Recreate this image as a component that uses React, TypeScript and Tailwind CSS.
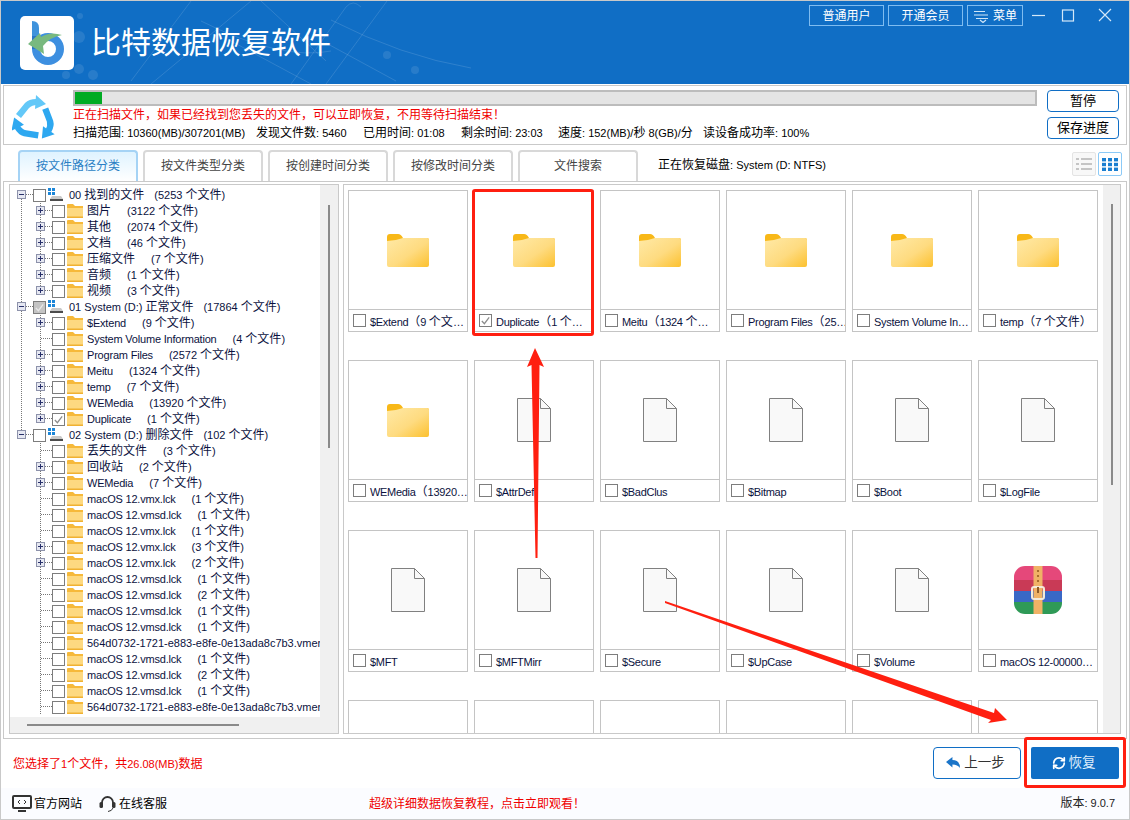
import { RefreshCw } from "lucide-react";

type TreeRow = {
  root?: boolean;
  name: string;
  count: string;
  plus?: boolean;
  check?: boolean;
  mixed?: boolean;
  group: number;
  last?: boolean;
};

const treeRows: TreeRow[] = [
  { root: true, name: "00 找到的文件", count: "(5253 个文件)", group: 0 },
  { name: "图片", count: "(3122 个文件)", plus: true, group: 0 },
  { name: "其他", count: "(2074 个文件)", plus: true, group: 0 },
  { name: "文档", count: "(46 个文件)", plus: true, group: 0 },
  { name: "压缩文件", count: "(7 个文件)", plus: true, group: 0 },
  { name: "音频", count: "(1 个文件)", plus: true, group: 0 },
  { name: "视频", count: "(3 个文件)", plus: true, group: 0, last: true },
  { root: true, name: "01 System (D:) 正常文件", count: "(17864 个文件)", mixed: true, group: 1 },
  { name: "$Extend", count: "(9 个文件)", plus: true, group: 1 },
  { name: "System Volume Information", count: "(4 个文件)", group: 1 },
  { name: "Program Files", count: "(2572 个文件)", plus: true, group: 1 },
  { name: "Meitu", count: "(1324 个文件)", plus: true, group: 1 },
  { name: "temp", count: "(7 个文件)", plus: true, group: 1 },
  { name: "WEMedia", count: "(13920 个文件)", plus: true, group: 1 },
  { name: "Duplicate", count: "(1 个文件)", plus: true, check: true, group: 1, last: true },
  { root: true, name: "02 System (D:) 删除文件", count: "(102 个文件)", group: 2 },
  { name: "丢失的文件", count: "(3 个文件)", group: 2 },
  { name: "回收站", count: "(2 个文件)", plus: true, group: 2 },
  { name: "WEMedia", count: "(7 个文件)", plus: true, group: 2 },
  { name: "macOS 12.vmx.lck", count: "(1 个文件)", group: 2 },
  { name: "macOS 12.vmsd.lck", count: "(1 个文件)", group: 2 },
  { name: "macOS 12.vmx.lck", count: "(1 个文件)", group: 2 },
  { name: "macOS 12.vmx.lck", count: "(3 个文件)", plus: true, group: 2 },
  { name: "macOS 12.vmx.lck", count: "(2 个文件)", plus: true, group: 2 },
  { name: "macOS 12.vmsd.lck", count: "(1 个文件)", group: 2 },
  { name: "macOS 12.vmsd.lck", count: "(2 个文件)", group: 2 },
  { name: "macOS 12.vmsd.lck", count: "(1 个文件)", group: 2 },
  { name: "macOS 12.vmsd.lck", count: "(1 个文件)", group: 2 },
  { name: "564d0732-1721-e883-e8fe-0e13ada8c7b3.vmem", count: "", group: 2 },
  { name: "macOS 12.vmsd.lck", count: "(1 个文件)", group: 2 },
  { name: "macOS 12.vmsd.lck", count: "(2 个文件)", group: 2 },
  { name: "macOS 12.vmsd.lck", count: "(1 个文件)", group: 2 },
  { name: "564d0732-1721-e883-e8fe-0e13ada8c7b3.vmem", count: "", group: 2 },
];

type Card = { label: string; kind: "folder" | "file" | "rar" | "none"; check?: boolean };

const cards: Card[] = [
  { label: "$Extend（9 个文…", kind: "folder" },
  { label: "Duplicate（1 个…", kind: "folder", check: true },
  { label: "Meitu（1324 个…", kind: "folder" },
  { label: "Program Files（25…", kind: "folder" },
  { label: "System Volume In…", kind: "folder" },
  { label: "temp（7 个文件）", kind: "folder" },
  { label: "WEMedia（13920…", kind: "folder" },
  { label: "$AttrDef", kind: "file" },
  { label: "$BadClus", kind: "file" },
  { label: "$Bitmap", kind: "file" },
  { label: "$Boot", kind: "file" },
  { label: "$LogFile", kind: "file" },
  { label: "$MFT", kind: "file" },
  { label: "$MFTMirr", kind: "file" },
  { label: "$Secure", kind: "file" },
  { label: "$UpCase", kind: "file" },
  { label: "$Volume", kind: "file" },
  { label: "macOS 12-00000…", kind: "rar" },
  { label: "", kind: "none" },
  { label: "", kind: "none" },
  { label: "", kind: "none" },
  { label: "", kind: "none" },
  { label: "", kind: "none" },
  { label: "", kind: "none" },
];

const tabs = ["按文件路径分类", "按文件类型分类", "按创建时间分类", "按修改时间分类", "文件搜索"];

// latin runs stay at the parent's 11px, chinese runs go to 12px like the real app
const Mixed = ({ text }: { text: string }) => (
  <>
    {text.split(/([\u3000-\u9fff\uff00-\uffef]+)/).map((part, index) =>
      index % 2 === 1 ? (
        <span key={index} className="text-[12px] leading-none tracking-normal">
          {part}
        </span>
      ) : (
        part
      ),
    )}
  </>
);

const Checkbox = ({ check, mixed }: { check?: boolean; mixed?: boolean }) => (
  <span
    className={`flex h-[13px] w-[13px] shrink-0 items-center justify-center border border-[#7d7d7d] ${
      mixed ? "bg-[#c4c4c4]" : "bg-white"
    }`}
  >
    {(check || mixed) && (
      <svg width="11" height="11" viewBox="0 0 12 12" fill="none">
        <path d="M2 6.5 L4.8 9.5 L10 2.5" stroke={mixed ? "#e8e8e8" : "#8c8c8c"} strokeWidth="1.4" />
      </svg>
    )}
  </span>
);

const Expander = ({ x, plus }: { x: number; plus?: boolean }) => (
  <g shapeRendering="crispEdges">
    <rect x={x + 0.5} y="3.5" width="8" height="8" fill="#e6e8f2" stroke="#8d92ab" />
    <path d={`M${x + 2} 7.5 H${x + 7}`} stroke="#28306a" />
    {plus && <path d={`M${x + 4.5} 5 V10`} stroke="#28306a" />}
  </g>
);

const dots = { stroke: "#777", strokeDasharray: "1 1", shapeRendering: "crispEdges" as const };

const Gutter = ({ row }: { row: TreeRow }) => {
  if (row.root) {
    return (
      <svg width="23" height="16" className="shrink-0">
        {row.group > 0 && <path d="M11.5 0 V4" {...dots} fill="none" />}
        {row.group < 2 && <path d="M11.5 12 V16" {...dots} fill="none" />}
        <path d="M16 7.5 H23" {...dots} fill="none" />
        <Expander x={7} />
      </svg>
    );
  }
  return (
    <svg width="42" height="16" className="shrink-0">
      {row.group < 2 && <path d="M11.5 0 V16" {...dots} fill="none" />}
      <path d={row.last ? "M30.5 0 V8" : "M30.5 0 V16"} {...dots} fill="none" />
      <path d="M31 7.5 H42" {...dots} fill="none" />
      {row.plus && <Expander x={26} plus />}
    </svg>
  );
};

const TreeFolder = () => (
  <svg width="16" height="14" viewBox="0 0 16 14" className="shrink-0">
    <path d="M0 1 Q0 0 1 0 H6 L8 2 H16 V13 Q16 14 15 14 H1 Q0 14 0 13 Z" fill="#f6b93a" />
    <rect x="0" y="4" width="16" height="10" fill="#fdd981" />
    <rect x="0" y="12.5" width="16" height="1.5" fill="#f0b132" />
  </svg>
);

const Drive = () => (
  <svg width="16" height="14" viewBox="0 0 16 14" className="shrink-0">
    <rect x="0" y="0" width="3" height="3" fill="#1c86d8" />
    <rect x="4" y="0" width="3" height="3" fill="#1c86d8" />
    <rect x="0" y="4" width="3" height="3" fill="#1c86d8" />
    <rect x="4" y="4" width="3" height="3" fill="#1c86d8" />
    <path d="M4 8 H13 L15 11 H2 Z" fill="#c9c9c9" />
    <rect x="2" y="11" width="13" height="2" fill="#4c4c4c" />
  </svg>
);

const BigFolder = () => (
  <svg width="42" height="33" viewBox="0 0 42 33">
    <defs>
      <linearGradient id="folderFill" x1="0" y1="0" x2="1" y2="1">
        <stop offset="0" stopColor="#ffe9a6" />
        <stop offset="0.55" stopColor="#fedb80" />
        <stop offset="1" stopColor="#fcc12f" />
      </linearGradient>
    </defs>
    <path d="M0 3 Q0 0 3 0 H11 Q14 0 16 4 H40 Q42 4 42 6 V10 H0 Z" fill="#f8b818" />
    <path d="M0 7 Q8 7 16 4 H40 Q42 4 42 6 V31 Q42 33 40 33 H2 Q0 33 0 31 Z" fill="url(#folderFill)" />
  </svg>
);

const FileIcon = () => (
  <svg width="34" height="44" viewBox="0 0 34 44" fill="none">
    <path d="M.5 .5 H23.5 L33.5 10.5 V43.5 H.5 Z" fill="#f9f9f9" stroke="#808080" />
    <path d="M23.5 .5 V10.5 H33.5" stroke="#808080" />
  </svg>
);

const RarIcon = () => (
  <svg width="48" height="48" viewBox="0 0 48 48">
    <defs>
      <clipPath id="rarClip">
        <rect width="48" height="48" rx="11" />
      </clipPath>
    </defs>
    <g clipPath="url(#rarClip)">
      <rect width="48" height="18" fill="#e5487a" />
      <rect y="14" width="48" height="11" fill="#c93a56" />
      <rect y="25" width="48" height="11" fill="#3a68c6" />
      <rect y="36" width="48" height="12" fill="#2f9a57" />
      <rect x="19.5" width="9" height="48" fill="#f0b266" />
      <rect x="23" y="4" width="2" height="2" fill="#a96d2c" />
      <rect x="23" y="9" width="2" height="2" fill="#a96d2c" />
      <rect x="23" y="14" width="2" height="2" fill="#a96d2c" />
      <rect x="18" y="21" width="12" height="12" rx="2" fill="none" stroke="#f4ead8" strokeWidth="2" />
      <rect x="23" y="21" width="2" height="6" fill="#8c5a26" />
    </g>
  </svg>
);

const RecycleIcon = () => (
  <svg width="46" height="46" viewBox="0 0 46 46" className="shrink-0">
    {[0, 120, 240].map((deg) => (
      <g key={deg} transform={`rotate(${deg} 22 25)`} fill={deg === 0 ? "#63c8f8" : "#2ea8f0"}>
        <path d="M4 19 L13 8 Q17 4 24 4 L25 10 Q20 10 17 13 L9 23 Z" />
        <path d="M24 0 L34 9 L23 14 Z" />
      </g>
    ))}
  </svg>
);

const Logo = () => (
  <div className="h-[54px] w-[54px] shrink-0 rounded-[5px] bg-white">
    <svg width="54" height="54" viewBox="0 0 54 54" fill="none">
      <path d="M12 5 Q19 5 19 12 V26 H12 Z" fill="#3f93dc" />
      <circle cx="28" cy="33" r="12" stroke="#3d8fe0" strokeWidth="8" />
      <path d="M15.5 20 V33" stroke="#2a76c8" strokeWidth="7" />
      <path d="M8 28 L20 17 L21 21 Q30 15 42 19 Q30 21 23 30 L24 38 Z" fill="#78b97f" />
    </svg>
  </div>
);

const MenuIcon = () => (
  <svg width="16" height="14" viewBox="0 0 16 14" fill="none" className="shrink-0">
    <path d="M1 2.5 H12 M1 6 H15 M3 9.5 H15" stroke="#cfe5f7" strokeWidth="1.2" />
    <path d="M7 11 L10 13.5 L13 11" stroke="#cfe5f7" strokeWidth="1.2" />
  </svg>
);

const App = () => {
  return (
    <div className="relative h-[820px] w-[1130px] overflow-hidden bg-white font-['Liberation_Sans','Noto_Sans_CJK_SC',sans-serif] text-[12px] text-black">
      <div className="flex h-full flex-col border border-[#c9c9c9]">
        {/* header */}
        <div className="relative flex h-[83px] shrink-0 items-start justify-between overflow-hidden bg-[#106ec5]">
          <svg className="absolute inset-0" width="1128" height="83" fill="none" stroke="#ffffff" strokeOpacity="0.13">
            <path d="M386 0 L325 83 M330 19 Q400 55 470 67 M325 42 L395 80 M130 80 L190 0 M150 83 L250 0 M230 40 L310 83 M260 0 L325 60 M200 20 Q280 60 330 50 M290 83 L345 6 Q352 -2 360 6" />
            <g fill="#ffffff" fillOpacity="0.1" stroke="none">
              <circle cx="386" cy="54" r="4" />
              <circle cx="414" cy="69" r="4" />
              <circle cx="78" cy="36" r="6" />
              <circle cx="79" cy="15" r="3" />
              <circle cx="78" cy="68" r="5" />
              <circle cx="92" cy="74" r="5" />
              <circle cx="65" cy="74" r="4" />
            </g>
          </svg>
          <div className="relative flex h-full items-center">
            <div className="ml-[19px]">
              <Logo />
            </div>
            <span className="ml-[17px] whitespace-nowrap text-[30px] leading-none text-white">比特数据恢复软件</span>
          </div>
          <div className="relative mr-[8px] mt-[4px] flex items-start">
            <div className="flex h-[21px] w-[75px] items-center justify-center border border-[#7fbcf0] text-white">普通用户</div>
            <div className="ml-[4px] flex h-[21px] w-[75px] items-center justify-center border border-[#7fbcf0] text-white">开通会员</div>
            <div className="ml-[4px] flex h-[21px] w-[56px] items-center justify-center gap-[4px] border border-[#7fbcf0] text-white">
              <MenuIcon />
              <span>菜单</span>
            </div>
            <svg width="90" height="21" viewBox="0 0 90 21" fill="none" stroke="#d4e8f8" strokeWidth="1.2" className="ml-[8px]">
              <path d="M1 10.5 H14" />
              <rect x="31.5" y="5" width="11" height="11" />
              <path d="M68 4 L80 16 M80 4 L68 16" />
            </svg>
          </div>
        </div>

        {/* scan status */}
        <div className="mx-[2px] mt-[1px] flex h-[60px] shrink-0 border border-[#c9c9c9]">
          <div className="ml-[8px] mt-[9px]">
            <RecycleIcon />
          </div>
          <div className="ml-[15px] flex w-[965px] flex-col pt-[4px]">
            <div className="h-[16px] w-[964px] border-2 border-[#bcbcbc] bg-[#e4e4e4]">
              <div className="h-full w-[27px] bg-[#00ab23]" />
            </div>
            <div className="mt-[1px] whitespace-nowrap text-[12px] leading-[17px] text-[#f00000]">
              正在扫描文件，如果已经找到您丢失的文件，可以立即恢复，不用等待扫描结束！
            </div>
            <div className="flex whitespace-nowrap text-[11px] leading-[18px]">
              <span className="w-[183px]"><Mixed text="扫描范围: 10360(MB)/307201(MB)" /></span>
              <span className="w-[107px]"><Mixed text="发现文件数: 5460" /></span>
              <span className="w-[98px]"><Mixed text="已用时间: 01:08" /></span>
              <span className="w-[97px]"><Mixed text="剩余时间: 23:03" /></span>
              <span className="w-[145px]"><Mixed text="速度: 152(MB)/秒  8(GB)/分" /></span>
              <span><Mixed text="读设备成功率: 100%" /></span>
            </div>
          </div>
          <div className="ml-[9px] flex flex-col gap-[5px] pt-[4px]">
            <div className="flex h-[22px] w-[72px] items-center justify-center rounded-[4px] border border-[#106ec5] text-[13px]">暂停</div>
            <div className="flex h-[22px] w-[72px] items-center justify-center rounded-[4px] border border-[#106ec5] text-[13px]">保存进度</div>
          </div>
        </div>

        {/* tabs */}
        <div className="mt-[5px] flex h-[31px] shrink-0 items-end pl-[17px]">
          {tabs.map((tab, index) => (
            <div
              key={tab}
              className={`mr-[5px] flex h-[31px] w-[120px] items-center justify-center rounded-t-[4px] border-x-2 border-t-2 pb-[2px] ${
                index === 0
                  ? "border-[#a5d3f5] bg-gradient-to-b from-[#dff3ff] to-white text-[#2a7fc4]"
                  : "border-[#d8d8d8] bg-white text-[#444]"
              }`}
            >
              {tab}
            </div>
          ))}
          <span className="mb-[1px] ml-[15px] self-center whitespace-nowrap text-[11px]">
            <Mixed text="正在恢复磁盘: System (D: NTFS)" />
          </span>
          <div className="mb-[5px] ml-auto mr-[7px] flex gap-[2px]">
            <div className="flex h-[24px] w-[24px] items-center justify-center rounded-[2px] border border-[#e4e4e4] bg-[#f8f8f8]">
              <svg width="16" height="12" viewBox="0 0 16 12">
                <path d="M0 1 H3 M5 1 H16 M0 6 H3 M5 6 H16 M0 11 H3 M5 11 H16" stroke="#b4b4b4" strokeWidth="1.6" />
              </svg>
            </div>
            <div className="flex h-[24px] w-[24px] items-center justify-center rounded-[2px] border border-[#8ccaf7] bg-white">
              <svg width="16" height="13" viewBox="0 0 16 13" fill="#1b7fd0">
                <rect x="0" y="0" width="4" height="3.4" />
                <rect x="6" y="0" width="4" height="3.4" />
                <rect x="12" y="0" width="4" height="3.4" />
                <rect x="0" y="4.8" width="4" height="3.4" />
                <rect x="6" y="4.8" width="4" height="3.4" />
                <rect x="12" y="4.8" width="4" height="3.4" />
                <rect x="0" y="9.6" width="4" height="3.4" />
                <rect x="6" y="9.6" width="4" height="3.4" />
                <rect x="12" y="9.6" width="4" height="3.4" />
              </svg>
            </div>
          </div>
        </div>

        {/* main frame */}
        <div className="mx-[2px] flex h-[558px] shrink-0 gap-[4px] border border-[#c9c9c9] px-[5px] pb-[5px] pt-[2px]">
          {/* tree */}
          <div className="flex h-[550px] w-[330px] shrink-0 flex-col border border-[#c9c9c9]">
            <div className="flex min-h-0 flex-1">
              <div className="min-w-0 flex-1 overflow-hidden pt-[2px]">
                {treeRows.map((row, index) => (
                  <div key={index} className="flex h-4 items-center whitespace-nowrap text-[11px] leading-4 text-[#0b1240]">
                    <Gutter row={row} />
                    <Checkbox check={row.check} mixed={row.mixed} />
                    {row.root ? (
                      <span className="ml-[2px] flex items-center">
                        <Drive />
                        <span className="ml-[5px]"><Mixed text={row.name} /></span>
                        <span className="ml-[10px]"><Mixed text={row.count} /></span>
                      </span>
                    ) : (
                      <span className="ml-[2px] flex items-center">
                        <TreeFolder />
                        <span className={`ml-[4px] ${row.count ? "tracking-[-0.2px]" : ""}`}><Mixed text={row.name} /></span>
                        {row.count && <span className="ml-[16px]"><Mixed text={row.count} /></span>}
                      </span>
                    )}
                  </div>
                ))}
              </div>
              <div className="flex w-[18px] shrink-0 justify-center bg-[#f0f0f0] pt-[20px]">
                <div className="h-[243px] w-[2px] bg-[#8a8a8a]" />
              </div>
            </div>
            <div className="flex h-[16px] shrink-0 items-center bg-[#f0f0f0] pl-[17px]">
              <div className="h-[2px] w-[212px] bg-[#8a8a8a]" />
            </div>
          </div>

          {/* cards */}
          <div className="flex h-[550px] min-w-0 flex-1 border border-[#c9c9c9]">
            <div className="min-w-0 flex-1 overflow-hidden pl-[4px] pt-[5px]">
              <div className="grid grid-cols-[repeat(6,120px)] gap-x-[6px] gap-y-[28px]">
                {cards.map((card, index) => (
                  <div key={index} className="flex h-[142px] flex-col border border-[#c4c4c4] bg-white">
                    <div className="flex h-[118px] items-center justify-center">
                      {card.kind === "folder" && <BigFolder />}
                      {card.kind === "file" && <FileIcon />}
                      {card.kind === "rar" && <RarIcon />}
                    </div>
                    <div className="flex h-[22px] items-center gap-[4px] overflow-hidden border-t border-[#c4c4c4] pl-[4px] text-[11px] leading-4 text-[#0b1240]">
                      <Checkbox check={card.check} />
                      <span className="mt-[3px] whitespace-nowrap tracking-[-0.3px]"><Mixed text={card.label} /></span>
                    </div>
                  </div>
                ))}
              </div>
            </div>
            <div className="flex w-[17px] shrink-0 justify-center bg-[#f0f0f0] pt-[19px]">
              <div className="h-[281px] w-[2px] bg-[#8a8a8a]" />
            </div>
          </div>
        </div>

        {/* selection + actions */}
        <div className="flex h-[49px] shrink-0 items-center justify-between pl-[12px] pr-[10px]">
          <span className="mt-[2px] text-[11px] text-[#f00000]"><Mixed text="您选择了1个文件，共26.08(MB)数据" /></span>
          <div className="mb-[1px] flex gap-[10px]">
            <div className="flex h-[32px] w-[88px] items-center justify-center gap-[3px] rounded-[4px] border border-[#106ec5] bg-white pr-[3px] text-[13.5px] text-[#333]">
              <svg width="15" height="14" viewBox="0 0 14 14" preserveAspectRatio="none">
                <path d="M0 6 L6 1 V4 Q13 4 13 12 Q11 8.5 6 8.5 V11.5 Z" fill="#1b75c9" />
              </svg>
              上一步
            </div>
            <div className="flex h-[32px] w-[88px] items-center justify-center gap-[3px] rounded-[2px] bg-[#106ec5] pr-[3px] text-[13.5px] text-[#dcecfa]">
              <RefreshCw size={14} strokeWidth={3} color="#ffffff" />
              恢复
            </div>
          </div>
        </div>

        {/* footer */}
        <div className="flex min-h-0 flex-1 items-center bg-[#fbfcff] pl-[11px] pr-[14px]">
          <svg width="20" height="17" viewBox="0 0 20 17" fill="none" className="shrink-0">
            <rect x="1" y="1" width="18" height="12" rx="1" stroke="#333" strokeWidth="2" />
            <path d="M8 5 L6 7 L8 9 M12 5 L14 7 L12 9" stroke="#333" />
            <path d="M6 16 H14" stroke="#333" strokeWidth="2" />
          </svg>
          <span className="ml-[2px]">官方网站</span>
          <svg width="17" height="18" viewBox="0 0 17 18" fill="none" className="ml-[17px] shrink-0">
            <path d="M3 9 V7.5 A5.5 5.5 0 0 1 14 7.5 V9" stroke="#333" strokeWidth="1.8" />
            <rect x="0.5" y="7" width="3.5" height="6" rx="1.5" fill="#333" />
            <rect x="13" y="7" width="3.5" height="6" rx="1.5" fill="#333" />
            <path d="M14 13 Q13 16 9 16.5" stroke="#333" />
          </svg>
          <span className="ml-[3px]">在线客服</span>
          <span className="ml-[202px] whitespace-nowrap text-[#f00000]">超级详细数据恢复教程，点击立即观看！</span>
          <span className="ml-auto whitespace-nowrap text-[11px] text-[#222]"><Mixed text="版本: 9.0.7" /></span>
        </div>
      </div>

      {/* red markup drawn on the screenshot */}
      <svg className="pointer-events-none absolute inset-0" width="1130" height="820" fill="none">
        <rect x="473.5" y="190.5" width="119" height="144" rx="1.5" stroke="#ff1f10" strokeWidth="3" />
        <rect x="1025.5" y="738.5" width="99" height="48" rx="1.5" stroke="#ff1f10" strokeWidth="3" />
        <path
          d="M535 348 L544 367 L539.5 365 L537.5 558 L535.5 558 L531.5 365 L527 367 Z"
          fill="#ff1f10"
        />
        <path
          d="M1007 720 L995 708 L994 713 L665 601 L665 603 L991 720 L988 723 Z"
          fill="#ff1f10"
        />
      </svg>
    </div>
  );
};

export default App;
